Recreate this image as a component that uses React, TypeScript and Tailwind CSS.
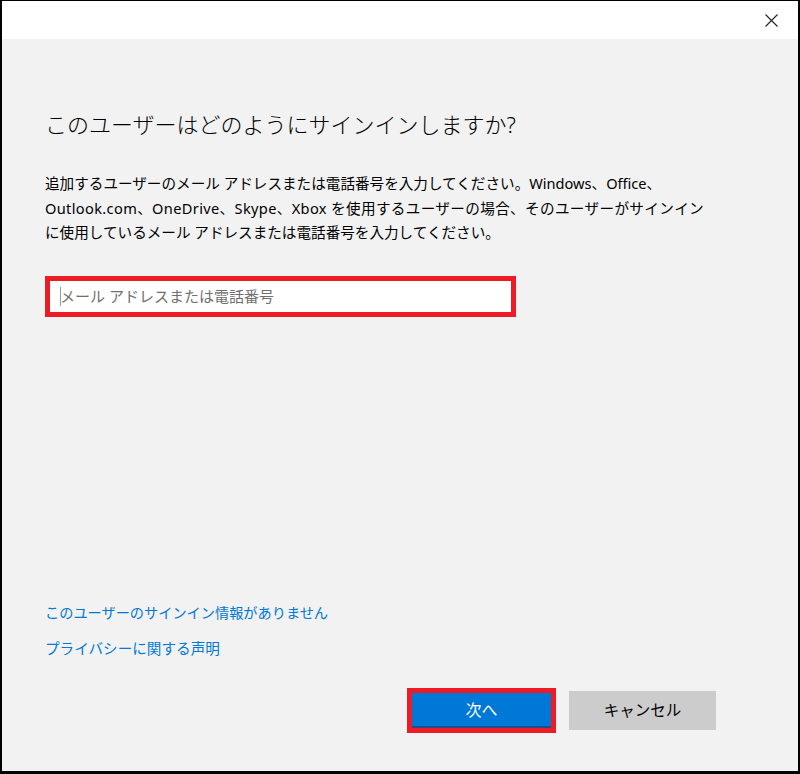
import React from "react";

const font = "font-['Noto_Sans','Noto_Sans_CJK_JP',sans-serif]";

export default function App() {
  return (
    <div
      className={`w-[800px] h-[774px] flex flex-col bg-[#f2f2f2] border-t border-l-2 border-r-2 border-b-[3px] border-black text-black ${font}`}
    >
      {/* Title bar */}
      <div className="h-[38px] bg-white flex items-center justify-end pr-[20px] shrink-0">
        <svg width="13" height="13" viewBox="0 0 13 13" className="mt-[1px]">
          <path d="M0.5 0.5 L12.5 12.5 M12.5 0.5 L0.5 12.5" stroke="#222" strokeWidth="1.1" fill="none" />
        </svg>
      </div>

      {/* Body */}
      <div className="flex-1 flex flex-col pl-[43px]">
        <h1 className="mt-[69px] text-[22px] leading-[32px] font-light">
          このユーザーはどのようにサインインしますか?
        </h1>

        <p className="mt-[31px] text-[14.6px] leading-[24.5px]">
          追加するユーザーのメール アドレスまたは電話番号を入力してください。Windows、Office、
          <br />
          <span className="tracking-[0.35px]">Outlook.com、OneDrive、Skype、Xbox を使用するユーザーの場合、そのユーザーがサインイン</span>
          <br />
          に使用しているメール アドレスまたは電話番号を入力してください。
        </p>

        <div className="relative mt-[31px] w-[471px] h-[41px] border-[5px] border-[#ed1c24] bg-white">
          <input
            type="text"
            placeholder="メール アドレスまたは電話番号"
            className={`w-full h-full pl-[10px] text-[15px] bg-white outline-none placeholder:text-[#707070] ${font}`}
          />
          <span className="absolute left-[10px] top-[6px] w-px h-[19px] bg-[#999]" />
        </div>

        <div className="flex-1" />

        <div className="flex flex-col gap-[11px] text-[#0078d7] leading-[24px]">
          <a href="#" className="w-fit text-[14.2px]">このユーザーのサインイン情報がありません</a>
          <a href="#" className="w-fit text-[14.6px]">プライバシーに関する声明</a>
        </div>

        <div className="mt-[28px] mb-[38px] flex items-center justify-end gap-[13px] pr-[82px]">
          <button className="w-[149px] h-[45px] border-[5px] border-[#ed1c24] bg-[#0078d7] text-white text-[16px] flex flex-col">
            <span className="flex-1 flex items-center justify-center">次へ</span>
            <span className="h-[2px] bg-[#1e4f8a]" />
          </button>
          <button className="w-[147px] h-[39px] bg-[#cccccc] text-black text-[15.5px]">
            キャンセル
          </button>
        </div>
      </div>
    </div>
  );
}
